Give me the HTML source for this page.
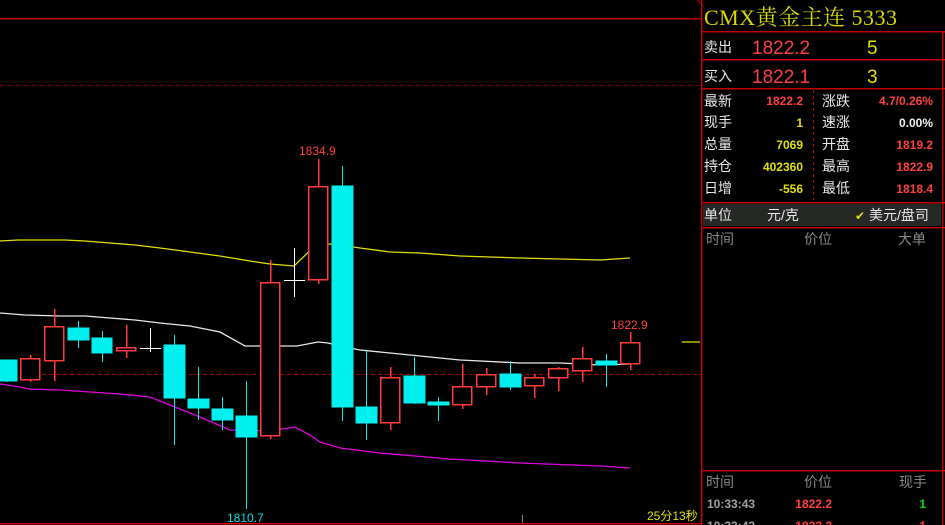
<!DOCTYPE html>
<html><head><meta charset="utf-8"><style>
html,body{margin:0;padding:0;background:#000;width:945px;height:525px;overflow:hidden}
svg{display:block}
text{font-family:"Liberation Sans","Noto Sans CJK SC",sans-serif}
.cn{font-family:"Liberation Sans","WenQuanYi Zen Hei","Noto Sans CJK SC",sans-serif}
</style></head><body>
<svg width="945" height="525" xmlns="http://www.w3.org/2000/svg" shape-rendering="crispEdges">
<rect width="945" height="525" fill="#000"/>
<line x1="0" y1="18.5" x2="701" y2="18.5" stroke="#c00000" stroke-width="1.5"/>
<line x1="0" y1="85.5" x2="701" y2="85.5" stroke="#900000" stroke-dasharray="4,4"/>
<line x1="0" y1="374.5" x2="701" y2="374.5" stroke="#b00000" stroke-dasharray="4,3"/>
<line x1="0" y1="523.5" x2="701" y2="523.5" stroke="#d00000" stroke-width="1.5"/>
<line x1="522.5" y1="515" x2="522.5" y2="523" stroke="#888"/>
<g fill="none" shape-rendering="auto" stroke-width="1.3">
<polyline stroke="#e0e000" points="0,241 18,240 65,240 85,241 110,243 135,245 160,248 190,252 220,256 250,261 270,264 294,266 318,243 340,245 360,248 390,252 420,253 460,256 520,258 560,259 600,260 630,258"/>
<line x1="682" y1="342" x2="700" y2="342" stroke="#e0e000"/>
<polyline stroke="#e8e8e8" points="0,313 25,315 60,316 85,316 110,318 135,320 160,323 190,326 220,332 245,346 270,346 297,346 318,342 328,343 340,346 360,350 390,353 420,356 460,360 520,363 560,363 600,365 630,364"/>
<polyline stroke="#e000e0" points="0,384 20,387 30,389 60,390 90,392 120,394 150,397 170,405 200,417 230,430 270,431 295,427 310,435 320,442 340,448 380,453 450,459 520,463 600,466 630,468"/>
</g>
<g>
<g fill="#00f0f0" stroke="#00f0f0">
<line x1="7" y1="360" x2="7" y2="382"/><rect x="0" y="360" width="17" height="21"/>
<line x1="78.5" y1="321" x2="78.5" y2="348"/><rect x="68" y="328" width="21" height="12"/>
<line x1="102.5" y1="331" x2="102.5" y2="362"/><rect x="92" y="338" width="20" height="15"/>
<line x1="174.5" y1="335" x2="174.5" y2="445"/><rect x="164" y="345" width="21" height="53"/>
<line x1="198.5" y1="367" x2="198.5" y2="420"/><rect x="188" y="399" width="21" height="9"/>
<line x1="222.5" y1="397" x2="222.5" y2="430"/><rect x="212" y="409" width="21" height="11"/>
<line x1="246.5" y1="381" x2="246.5" y2="509"/><rect x="236" y="416" width="21" height="21"/>
<line x1="342.5" y1="166" x2="342.5" y2="421"/><rect x="332" y="186" width="21" height="221"/>
<line x1="366.5" y1="351" x2="366.5" y2="440"/><rect x="356" y="407" width="21" height="16"/>
<line x1="414.5" y1="357" x2="414.5" y2="404"/><rect x="404" y="376" width="21" height="27"/>
<line x1="438.5" y1="397" x2="438.5" y2="421"/><rect x="428" y="402" width="21" height="3"/>
<line x1="510.5" y1="361" x2="510.5" y2="390"/><rect x="500" y="374" width="21" height="13"/>
<line x1="606.5" y1="354" x2="606.5" y2="387"/><rect x="596" y="361" width="21" height="4"/>
</g>
<g fill="#000" stroke="#ff3b3b" stroke-width="1.5">
<line x1="30.5" y1="355" x2="30.5" y2="382"/><rect x="20.5" y="358.5" width="19" height="21"/>
<line x1="54.5" y1="309" x2="54.5" y2="381"/><rect x="44.5" y="326.5" width="19" height="34"/>
<line x1="126.5" y1="325" x2="126.5" y2="358"/><rect x="116.5" y="347.5" width="19" height="3"/>
<line x1="270.5" y1="260" x2="270.5" y2="439"/><rect x="260.5" y="282.5" width="19" height="153"/>
<line x1="318.5" y1="159" x2="318.5" y2="284"/><rect x="308.5" y="186.5" width="19" height="93"/>
<line x1="390.5" y1="367" x2="390.5" y2="430"/><rect x="380.5" y="377.5" width="19" height="45"/>
<line x1="462.5" y1="364" x2="462.5" y2="409"/><rect x="452.5" y="386.5" width="19" height="18"/>
<line x1="486.5" y1="368" x2="486.5" y2="395"/><rect x="476.5" y="374.5" width="19" height="12"/>
<line x1="534.5" y1="374" x2="534.5" y2="398"/><rect x="524.5" y="377.5" width="19" height="8"/>
<line x1="558.5" y1="367" x2="558.5" y2="391"/><rect x="548.5" y="368.5" width="19" height="9"/>
<line x1="582.5" y1="347" x2="582.5" y2="382"/><rect x="572.5" y="358.5" width="19" height="12"/>
<line x1="630.5" y1="332" x2="630.5" y2="370"/><rect x="620.5" y="342.5" width="19" height="21"/>
</g>
<g stroke="#fff">
<line x1="150.5" y1="328" x2="150.5" y2="352"/><line x1="140" y1="348.5" x2="161" y2="348.5"/>
<line x1="294.5" y1="248" x2="294.5" y2="297"/><line x1="284" y1="280.5" x2="305" y2="280.5"/>
</g>
</g>
<text x="299" y="155" fill="#ff4040" font-size="12">1834.9</text>
<text x="611" y="329" fill="#ff4040" font-size="12">1822.9</text>
<text x="227" y="522" fill="#00e0e0" font-size="12">1810.7</text>
<text x="647" y="520" fill="#e0e000" font-size="12" class="cn">25分13秒</text>

<g stroke="#c00000" stroke-width="1.5" fill="none">
<line x1="701.5" y1="0" x2="701.5" y2="525"/>
<line x1="942.5" y1="31" x2="942.5" y2="525"/>
<line x1="701" y1="31.5" x2="945" y2="31.5"/>
<line x1="701" y1="59.5" x2="945" y2="59.5"/>
<line x1="701" y1="88.5" x2="945" y2="88.5"/>
<line x1="701" y1="202.5" x2="945" y2="202.5"/>
<line x1="701" y1="227.5" x2="945" y2="227.5"/>
<line x1="701" y1="470.5" x2="945" y2="470.5"/>
</g>
<line x1="697" y1="0" x2="701" y2="4" stroke="#c00000"/>
<line x1="813.5" y1="90" x2="813.5" y2="200" stroke="#c00000" stroke-dasharray="3,3"/>
<rect x="703" y="204" width="238" height="22" fill="#252825"/>
<text x="704" y="25" fill="#d8d800" font-size="22" textLength="193" lengthAdjust="spacing" style="font-family:'Liberation Serif','Noto Serif CJK SC',serif">CMX黄金主连 5333</text>
<g font-size="14" class="cn" fill="#e8e8e8">
<text x="704" y="52">卖出</text><text x="704" y="81">买入</text>
</g>
<text x="752" y="54" fill="#ff4040" font-size="19">1822.2</text>
<text x="752" y="83" fill="#ff4040" font-size="19">1822.1</text>
<text x="867" y="54" fill="#e0e000" font-size="19">5</text>
<text x="867" y="83" fill="#e0e000" font-size="19">3</text>
<g font-size="14" class="cn" fill="#e8e8e8">
<text x="704" y="106">最新</text><text x="704" y="127">现手</text><text x="704" y="149">总量</text><text x="704" y="171">持仓</text><text x="704" y="193">日增</text>
<text x="822" y="106">涨跌</text><text x="822" y="127">速涨</text><text x="822" y="149">开盘</text><text x="822" y="171">最高</text><text x="822" y="193">最低</text>
</g>
<g font-size="12" font-weight="bold" text-anchor="end">
<text x="803" y="105" fill="#ff4040">1822.2</text>
<text x="803" y="127" fill="#e0e000">1</text>
<text x="803" y="149" fill="#e0e000">7069</text>
<text x="803" y="171" fill="#e0e000">402360</text>
<text x="803" y="193" fill="#e0e000">-556</text>
<text x="933" y="105" fill="#ff4040">4.7/0.26%</text>
<text x="933" y="127" fill="#f0f0f0">0.00%</text>
<text x="933" y="149" fill="#ff4040">1819.2</text>
<text x="933" y="171" fill="#ff4040">1822.9</text>
<text x="933" y="193" fill="#ff4040">1818.4</text>
</g>
<g font-size="14" class="cn">
<text x="704" y="220" fill="#e8e8e8">单位</text>
<text x="767" y="220" fill="#e8e8e8">元/克</text>
<text x="855" y="220" fill="#e0e000" font-size="12">✔</text>
<text x="869" y="220" fill="#e8e8e8">美元/盘司</text>
<text x="706" y="244" fill="#888">时间</text>
<text x="804" y="244" fill="#888">价位</text>
<text x="898" y="244" fill="#888">大单</text>
<text x="706" y="487" fill="#888">时间</text>
<text x="804" y="487" fill="#888">价位</text>
<text x="899" y="487" fill="#888">现手</text>
</g>
<text x="707" y="508" fill="#a0a0a0" font-size="12" font-weight="bold">10:33:43</text>
<text x="832" y="508" fill="#ff4040" font-size="12" font-weight="bold" text-anchor="end">1822.2</text>
<text x="926" y="508" fill="#00e000" font-size="12" font-weight="bold" text-anchor="end">1</text>
<text x="707" y="530" fill="#a0a0a0" font-size="12" font-weight="bold">10:33:43</text>
<text x="832" y="530" fill="#ff4040" font-size="12" font-weight="bold" text-anchor="end">1822.2</text>
<text x="926" y="530" fill="#ff4040" font-size="12" font-weight="bold" text-anchor="end">1</text>
</svg>
</body></html>
